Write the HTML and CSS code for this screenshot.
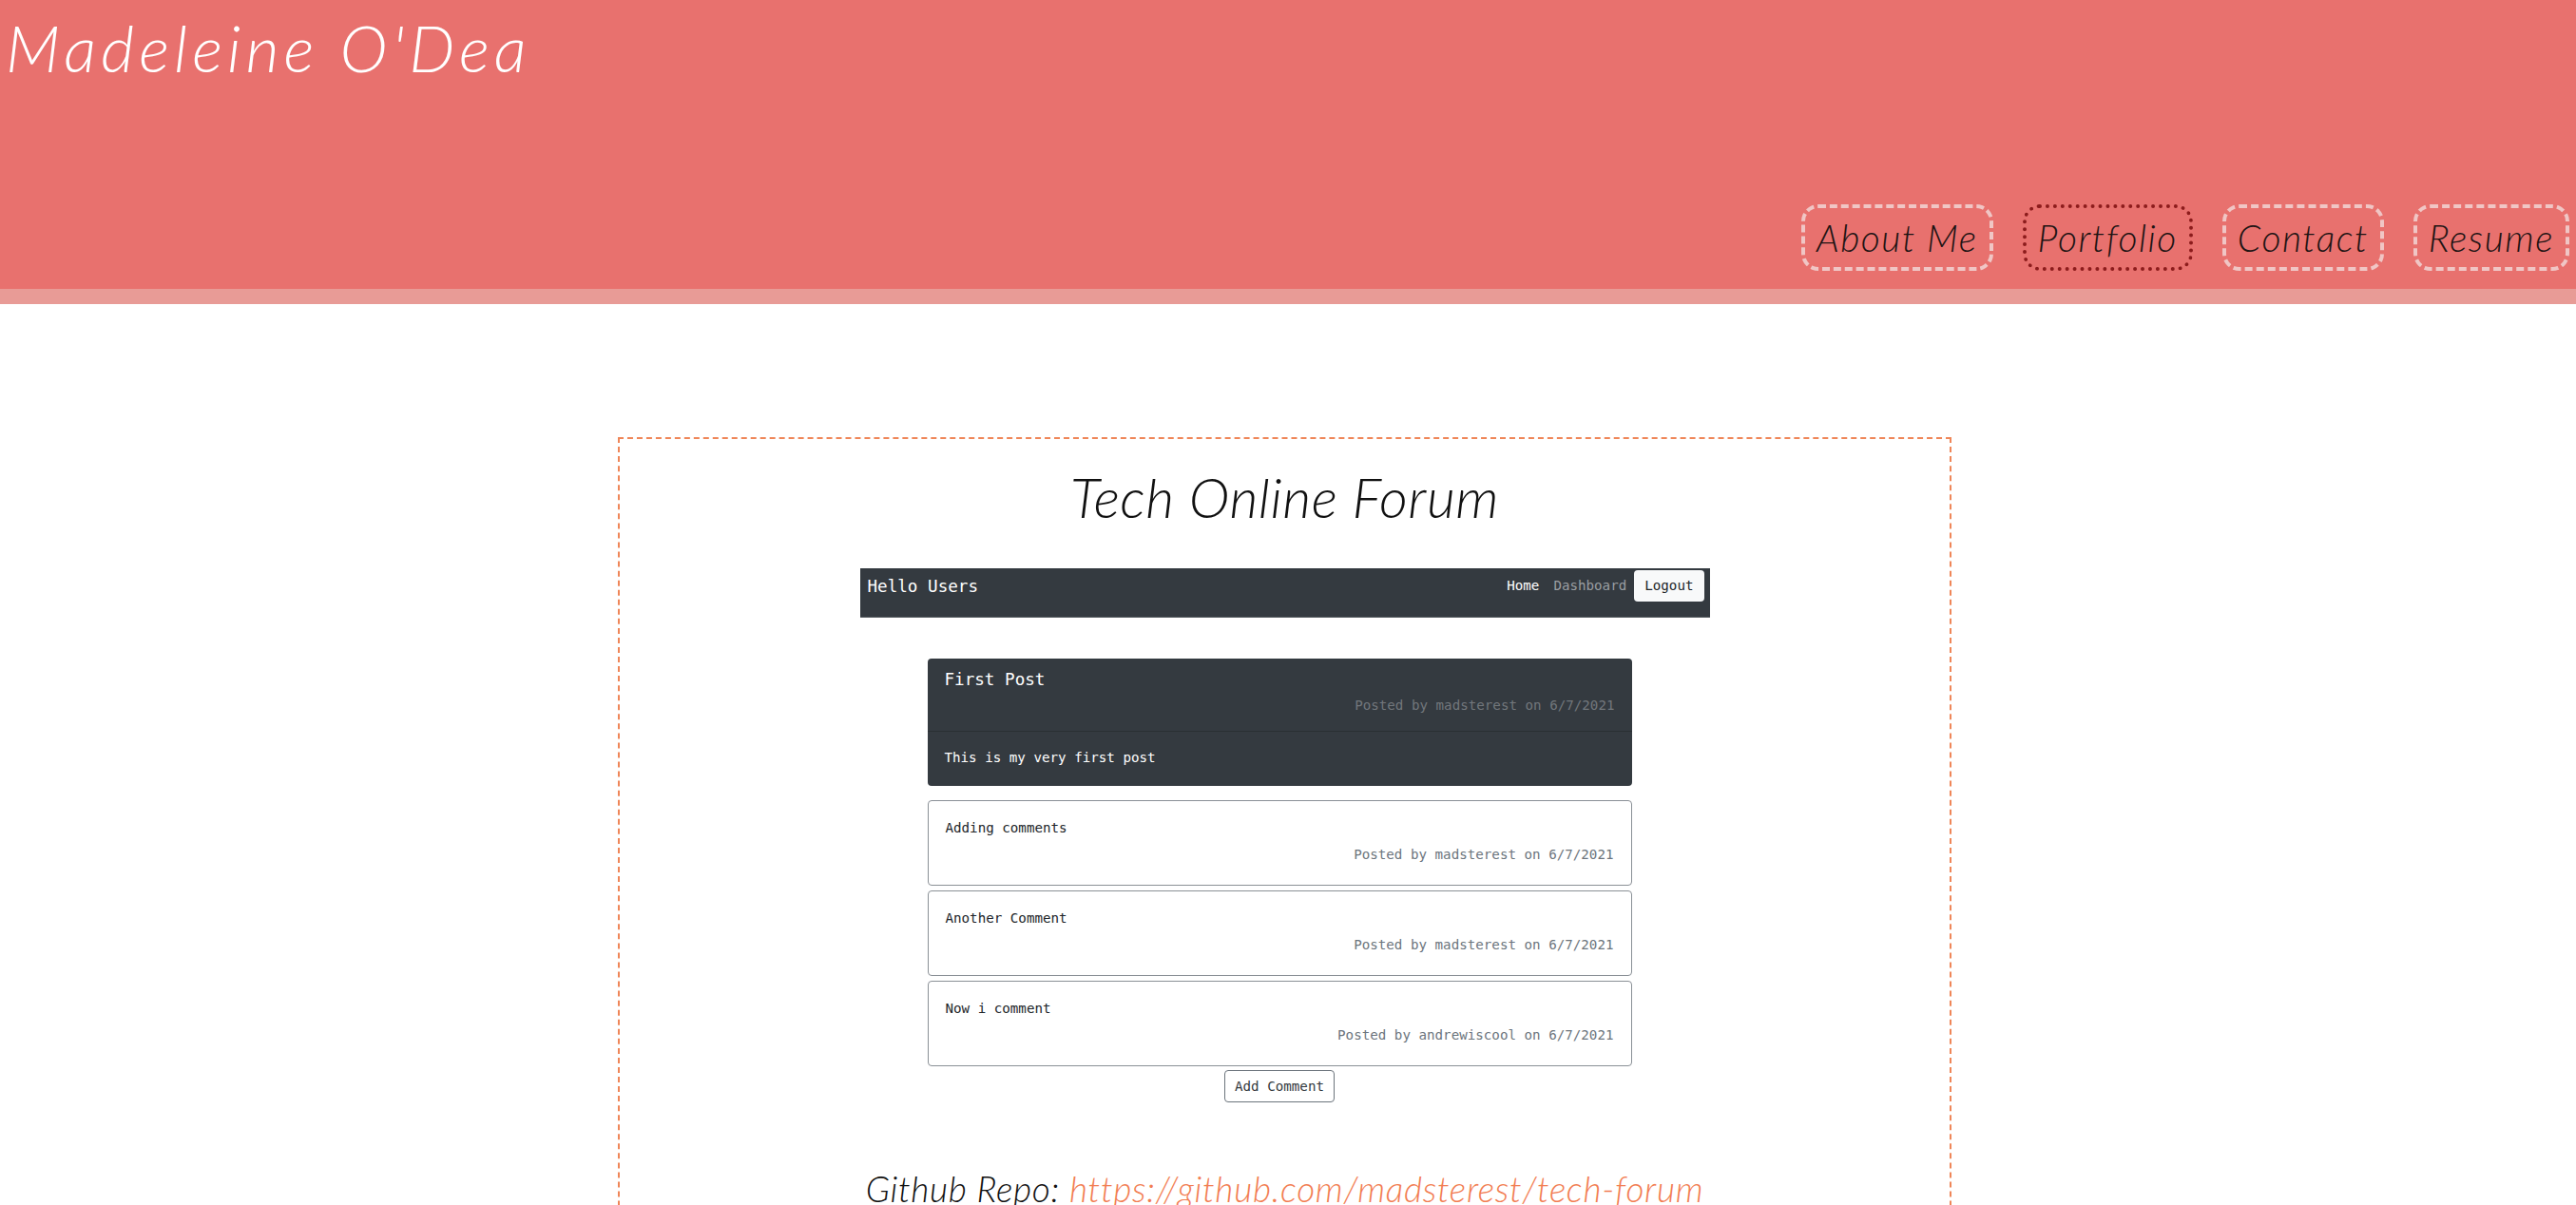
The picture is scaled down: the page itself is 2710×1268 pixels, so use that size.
FILE: index.html
```html
<!DOCTYPE html>
<html lang="en">
<head>
<meta charset="utf-8">
<title>Madeleine O'Dea - Portfolio</title>
<link rel="stylesheet" href="styles.css">
</head>
<body>
<header class="site-header">
  <h1 class="brand">Madeleine O'Dea</h1>
  <nav class="site-nav">
    <a class="nav-link" href="#about">About Me</a>
    <a class="nav-link active" href="#portfolio">Portfolio</a>
    <a class="nav-link" href="#contact">Contact</a>
    <a class="nav-link" href="#resume">Resume</a>
  </nav>
</header>
<div class="band"></div>
<main class="page">
  <section class="project">
    <h2 class="project-title">Tech Online Forum</h2>
    <div class="shot">
      <div class="fnav">
        <span class="fnav-brand">Hello Users</span>
        <div class="fnav-links">
          <span class="fnav-link current">Home</span>
          <span class="fnav-link">Dashboard</span>
          <span class="fnav-btn">Logout</span>
        </div>
      </div>
      <div class="fcol">
        <div class="post">
          <div class="post-head">
            <div class="post-title">First Post</div>
            <div class="post-meta">Posted by madsterest on 6/7/2021</div>
          </div>
          <div class="post-body">This is my very first post</div>
        </div>
        <div class="comment">
          <div class="comment-text">Adding comments</div>
          <div class="comment-meta">Posted by madsterest on 6/7/2021</div>
        </div>
        <div class="comment">
          <div class="comment-text">Another Comment</div>
          <div class="comment-meta">Posted by madsterest on 6/7/2021</div>
        </div>
        <div class="comment">
          <div class="comment-text">Now i comment</div>
          <div class="comment-meta">Posted by andrewiscool on 6/7/2021</div>
        </div>
        <div class="add-row"><span class="add-btn">Add Comment</span></div>
      </div>
    </div>
    <p class="repo">Github Repo: <a class="repo-link" href="#">https://github.com/madsterest/tech-forum</a></p>
  </section>
</main>
</body>
</html>
```
FILE: styles.css
```css
html, body {
  margin: 0;
  padding: 0;
  background: #ffffff;
}
body {
  font-family: "Lato", "Open Sans", sans-serif;
  overflow: hidden;
}

.site-header {
  background: #e8716e;
  height: 304px;
  box-sizing: border-box;
  padding: 0 7px 0 6px;
  display: flex;
  flex-direction: column;
}
.brand {
  margin: 9px 0 0 0;
  font-size: 68px;
  line-height: 1.2;
  font-weight: 300;
  font-style: italic;
  color: #ffffff;
  letter-spacing: 5px;
}
.site-nav {
  margin-top: auto;
  margin-bottom: 19px;
  display: flex;
  justify-content: flex-end;
  gap: 31px;
}
.nav-link {
  display: block;
  padding: 7px 12px;
  font-size: 39px;
  line-height: 48px;
  font-weight: 300;
  font-style: italic;
  color: #1e1414;
  text-decoration: none;
  border: 4px dashed #f0c6c5;
  border-radius: 18px;
  letter-spacing: 1.5px;
}
.nav-link.active {
  border: 4px dotted #8c1c1c;
}

.band {
  height: 16px;
  background: #e89b96;
}

.page {
  padding: 140px 7px 0 0;
}
.project {
  width: 1403px;
  margin: 0 auto;
  box-sizing: border-box;
  border: 2px dashed #ef8658;
  padding-top: 26px;
  height: 900px;
}
.project-title {
  margin: 0;
  text-align: center;
  font-size: 58px;
  line-height: 70px;
  font-weight: 300;
  font-style: italic;
  color: #111111;
  letter-spacing: 0.5px;
}

.shot {
  width: 894px;
  margin: 40px auto 0;
  font-family: "DejaVu Sans Mono", monospace;
  font-size: 14.2px;
}
.fnav {
  background: #343a40;
  height: 52px;
  box-sizing: border-box;
  padding: 2px 6px 0 8px;
  display: flex;
  justify-content: space-between;
  align-items: flex-start;
  border-bottom: 1px solid #5c6166;
}
.fnav-brand {
  color: #ffffff;
  font-size: 17.6px;
  line-height: 26px;
  margin-top: 4px;
}
.fnav-links {
  display: flex;
  align-items: flex-start;
}
.fnav-link {
  color: #9a9ea2;
  line-height: 21px;
  margin-top: 6px;
  margin-right: 15px;
}
.fnav-link + .fnav-link {
  margin-right: 8px;
}
.fnav-link.current {
  color: #ffffff;
}
.fnav-btn {
  background: #f8f9fa;
  color: #212529;
  line-height: 21px;
  padding: 6px 11px;
  border-radius: 4px;
}

.fcol {
  padding: 0 82px 0 71px;
  margin-top: 43px;
}
.post {
  background: #343a40;
  border-radius: 4px;
  color: #ffffff;
}
.post-head {
  padding: 12px 18px 16px;
  border-bottom: 1px solid #2a2f33;
}
.post-title {
  font-size: 17.6px;
  line-height: 21px;
  margin-bottom: 6px;
}
.post-meta {
  text-align: right;
  color: #72777c;
  line-height: 21px;
}
.post-body {
  padding: 17px 18px 19px;
  line-height: 21px;
}
.comment {
  margin-top: 5px;
  border: 1px solid #8a9096;
  border-radius: 4px;
  padding: 18px 18px 21px;
  color: #212529;
}
.post + .comment {
  margin-top: 15px;
}
.comment-text {
  line-height: 21px;
  margin-bottom: 7px;
}
.comment-meta {
  text-align: right;
  color: #6c757d;
  line-height: 21px;
}
.add-row {
  display: flex;
  justify-content: center;
  margin-top: 4px;
}
.add-btn {
  border: 1px solid #6c757d;
  border-radius: 4px;
  padding: 6px 10px;
  line-height: 20px;
  color: #343a40;
}

.repo {
  margin: 68px 0 0 0;
  text-align: center;
  font-size: 37px;
  line-height: 46px;
  font-weight: 300;
  font-style: italic;
  color: #111111;
  letter-spacing: 0.7px;
}
.repo-link {
  color: #f27d52;
  text-decoration: none;
}
```
